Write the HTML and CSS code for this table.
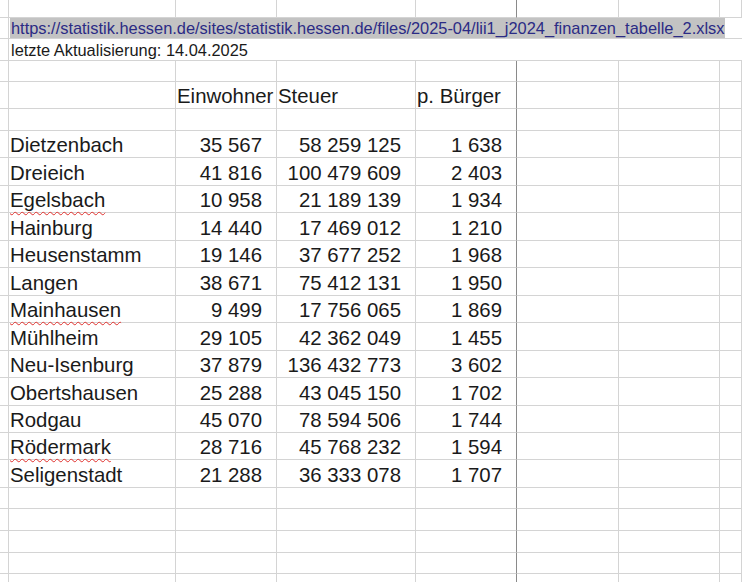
FILE: index.html
```html
<!DOCTYPE html>
<html lang="de">
<head>
<meta charset="utf-8">
<title>Steuer je Bürger</title>
<link rel="stylesheet" href="styles.css">
</head>
<body>
<div class="sheet">
  <div class="row h18"><div class="c"></div><div class="c"></div><div class="c"></div><div class="c"></div><div class="c dk"></div><div class="c"></div><div class="c"></div><div class="c"></div></div>
  <div class="row h21"><div class="c"></div><div class="c span small"><span class="sel">https://statistik.hessen.de/sites/statistik.hessen.de/files/2025-04/lii1_j2024_finanzen_tabelle_2.xlsx</span></div></div>
  <div class="row h22"><div class="c"></div><div class="c span small">letzte Aktualisierung: 14.04.2025</div></div>
  <div class="row h21"><div class="c"></div><div class="c"></div><div class="c"></div><div class="c"></div><div class="c dk"></div><div class="c"></div><div class="c"></div><div class="c"></div></div>
  <div class="row h27"><div class="c"></div><div class="c"></div><div class="c t">Einwohner</div><div class="c t">Steuer</div><div class="c t dk">p. Bürger</div><div class="c"></div><div class="c"></div><div class="c"></div></div>
  <div class="row h22"><div class="c"></div><div class="c"></div><div class="c"></div><div class="c"></div><div class="c dk"></div><div class="c"></div><div class="c"></div><div class="c"></div></div>

  <div class="row d"><div class="c"></div><div class="c t">Dietzenbach</div><div class="c t n">35 567</div><div class="c t n">58 259 125</div><div class="c t n dk">1 638</div><div class="c"></div><div class="c"></div><div class="c"></div></div>
  <div class="row d"><div class="c"></div><div class="c t">Dreieich</div><div class="c t n">41 816</div><div class="c t n">100 479 609</div><div class="c t n dk">2 403</div><div class="c"></div><div class="c"></div><div class="c"></div></div>
  <div class="row d"><div class="c"></div><div class="c t"><span class="sp">Egelsbach</span></div><div class="c t n">10 958</div><div class="c t n">21 189 139</div><div class="c t n dk">1 934</div><div class="c"></div><div class="c"></div><div class="c"></div></div>
  <div class="row d"><div class="c"></div><div class="c t">Hainburg</div><div class="c t n">14 440</div><div class="c t n">17 469 012</div><div class="c t n dk">1 210</div><div class="c"></div><div class="c"></div><div class="c"></div></div>
  <div class="row d"><div class="c"></div><div class="c t">Heusenstamm</div><div class="c t n">19 146</div><div class="c t n">37 677 252</div><div class="c t n dk">1 968</div><div class="c"></div><div class="c"></div><div class="c"></div></div>
  <div class="row d"><div class="c"></div><div class="c t">Langen</div><div class="c t n">38 671</div><div class="c t n">75 412 131</div><div class="c t n dk">1 950</div><div class="c"></div><div class="c"></div><div class="c"></div></div>
  <div class="row d"><div class="c"></div><div class="c t"><span class="sp">Mainhausen</span></div><div class="c t n">9 499</div><div class="c t n">17 756 065</div><div class="c t n dk">1 869</div><div class="c"></div><div class="c"></div><div class="c"></div></div>
  <div class="row d"><div class="c"></div><div class="c t">Mühlheim</div><div class="c t n">29 105</div><div class="c t n">42 362 049</div><div class="c t n dk">1 455</div><div class="c"></div><div class="c"></div><div class="c"></div></div>
  <div class="row d"><div class="c"></div><div class="c t">Neu-Isenburg</div><div class="c t n">37 879</div><div class="c t n">136 432 773</div><div class="c t n dk">3 602</div><div class="c"></div><div class="c"></div><div class="c"></div></div>
  <div class="row d"><div class="c"></div><div class="c t">Obertshausen</div><div class="c t n">25 288</div><div class="c t n">43 045 150</div><div class="c t n dk">1 702</div><div class="c"></div><div class="c"></div><div class="c"></div></div>
  <div class="row d"><div class="c"></div><div class="c t">Rodgau</div><div class="c t n">45 070</div><div class="c t n">78 594 506</div><div class="c t n dk">1 744</div><div class="c"></div><div class="c"></div><div class="c"></div></div>
  <div class="row d"><div class="c"></div><div class="c t"><span class="sp">Rödermark</span></div><div class="c t n">28 716</div><div class="c t n">45 768 232</div><div class="c t n dk">1 594</div><div class="c"></div><div class="c"></div><div class="c"></div></div>
  <div class="row d"><div class="c"></div><div class="c t">Seligenstadt</div><div class="c t n">21 288</div><div class="c t n">36 333 078</div><div class="c t n dk">1 707</div><div class="c"></div><div class="c"></div><div class="c"></div></div>

  <div class="row h21"><div class="c"></div><div class="c"></div><div class="c"></div><div class="c"></div><div class="c dk"></div><div class="c"></div><div class="c"></div><div class="c"></div></div>
  <div class="row h22"><div class="c"></div><div class="c"></div><div class="c"></div><div class="c"></div><div class="c dk"></div><div class="c"></div><div class="c"></div><div class="c"></div></div>
  <div class="row h22"><div class="c"></div><div class="c"></div><div class="c"></div><div class="c"></div><div class="c dk"></div><div class="c"></div><div class="c"></div><div class="c"></div></div>
  <div class="row h21"><div class="c"></div><div class="c"></div><div class="c"></div><div class="c"></div><div class="c dk"></div><div class="c"></div><div class="c"></div><div class="c"></div></div>
  <div class="row h22"><div class="c"></div><div class="c"></div><div class="c"></div><div class="c"></div><div class="c dk"></div><div class="c"></div><div class="c"></div><div class="c"></div></div>
</div>
</body>
</html>
```
FILE: styles.css
```css
html, body {
  margin: 0;
  padding: 0;
  background: #ffffff;
}

body {
  font-family: "Liberation Sans", Arial, sans-serif;
  color: #1a1a1a;
  overflow: hidden;
}

.sheet {
  width: 742px;
}

.row {
  display: grid;
  grid-template-columns: 9px 167px 101px 139px 101px 102px 101px 1fr;
}

.h18 { height: 18px; }
.h21 { height: 21px; }
.h22 { height: 22px; }
.h27 { height: 27px; }
.d { height: 27.46px; }

.c {
  box-sizing: border-box;
  border-right: 1px solid #d4d4d4;
  border-bottom: 1px solid #d4d4d4;
  white-space: nowrap;
  min-width: 0;
}

.c.dk {
  border-right-color: #8a8a8a;
}

.c.span {
  grid-column: 2 / -1;
  border-right: none;
}

.small {
  font-size: 16.4px;
  line-height: 20px;
  padding-left: 2px;
  display: flex;
  align-items: flex-end;
}

.sel {
  background: #c3c3c3;
  color: #2b2b85;
  padding: 0 1px;
  margin-left: -1px;
}

.t {
  font-size: 20.4px;
  line-height: 23px;
  padding-left: 1px;
  display: flex;
  align-items: flex-end;
  padding-bottom: 0;
}

.n {
  justify-content: flex-end;
  padding-left: 0;
  padding-right: 14px;
}

.sp {
  text-decoration: underline wavy #e0302c;
  text-decoration-thickness: 1px;
  text-underline-offset: 4px;
}
```
